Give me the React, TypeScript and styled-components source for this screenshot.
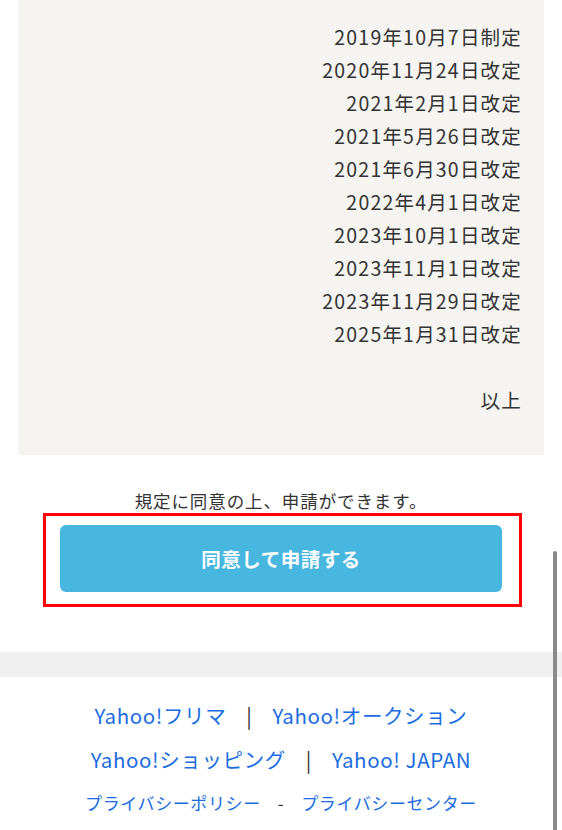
import * as React from 'react';
import styled, { createGlobalStyle } from 'styled-components';

const GlobalStyle = createGlobalStyle`
html, body {
  margin:0;
  padding:0;
  background:#fff;
  font-family:"Noto Sans CJK JP","Noto Sans",sans-serif;
  color:#333;
}
`;

const Page = styled.div`
width:562px;
height:830px;
overflow:hidden;
position:relative;
`;

const History = styled.div`
margin:0 18px;
padding:20px 22px 39px 0;
background:#f5f4f1;
text-align:right;
font-size:19.5px;
line-height:33px;
letter-spacing:1.2px;
color:#333;
`;

const Spacer = styled.div`
height:33px;
`;

const Note = styled.p`
margin:34px 0 0;
text-align:center;
font-size:17.5px;
line-height:24px;
letter-spacing:0.9px;
color:#333;
`;

const Highlight = styled.div`
margin:0 40px 0 43px;
padding:9px 17px 12px 14px;
border:3px solid #f00;
`;

const AgreeButton = styled.button`
display:flex;
align-items:center;
justify-content:center;
width:100%;
height:67px;
border:none;
border-radius:6px;
background:#47b7df;
color:#fff;
font-family:"Noto Sans CJK JP",sans-serif;
font-size:19.5px;
font-weight:700;
letter-spacing:0.5px;
`;

const Band = styled.div`
margin-top:45px;
height:25px;
background:#f0f0f0;
`;

const Footer = styled.nav`
display:flex;
flex-direction:column;
align-items:center;
padding-top:16px;
`;

const LinkRow = styled.div<{ $small?: boolean }>`
display:flex;
align-items:center;
justify-content:center;
gap:${p => (p.$small ? '17px' : '20px')};
height:${p => (p.$small ? '43px' : '44px')};
font-size:${p => (p.$small ? '17px' : '20.5px')};
letter-spacing:0.6px;
`;

const FooterLink = styled.a`
color:#1b6ce0;
text-decoration:none;
`;

const Sep = styled.span`
color:#333;
`;

const Scrollbar = styled.div`
position:absolute;
right:5px;
top:551px;
width:4px;
height:300px;
border-radius:2px;
background:#8a8a8a;
`;

const dates = [
  '2019年10月7日制定',
  '2020年11月24日改定',
  '2021年2月1日改定',
  '2021年5月26日改定',
  '2021年6月30日改定',
  '2022年4月1日改定',
  '2023年10月1日改定',
  '2023年11月1日改定',
  '2023年11月29日改定',
  '2025年1月31日改定',
];

export default function App() {
  return (
    <Page>
      <GlobalStyle />
      <History>
        {dates.map(d => (
          <div key={d}>{d}</div>
        ))}
        <Spacer />
        <div>以上</div>
      </History>

      <Note>規定に同意の上、申請ができます。</Note>
      <Highlight>
        <AgreeButton>同意して申請する</AgreeButton>
      </Highlight>

      <Band />

      <Footer>
        <LinkRow>
          <FooterLink href="#">Yahoo!フリマ</FooterLink>
          <Sep>|</Sep>
          <FooterLink href="#">Yahoo!オークション</FooterLink>
        </LinkRow>
        <LinkRow>
          <FooterLink href="#">Yahoo!ショッピング</FooterLink>
          <Sep>|</Sep>
          <FooterLink href="#">Yahoo! JAPAN</FooterLink>
        </LinkRow>
        <LinkRow $small>
          <FooterLink href="#">プライバシーポリシー</FooterLink>
          <Sep>-</Sep>
          <FooterLink href="#">プライバシーセンター</FooterLink>
        </LinkRow>
        <LinkRow $small>
          <FooterLink href="#">利用規約</FooterLink>
        </LinkRow>
      </Footer>
      <Scrollbar />
    </Page>
  );
}
